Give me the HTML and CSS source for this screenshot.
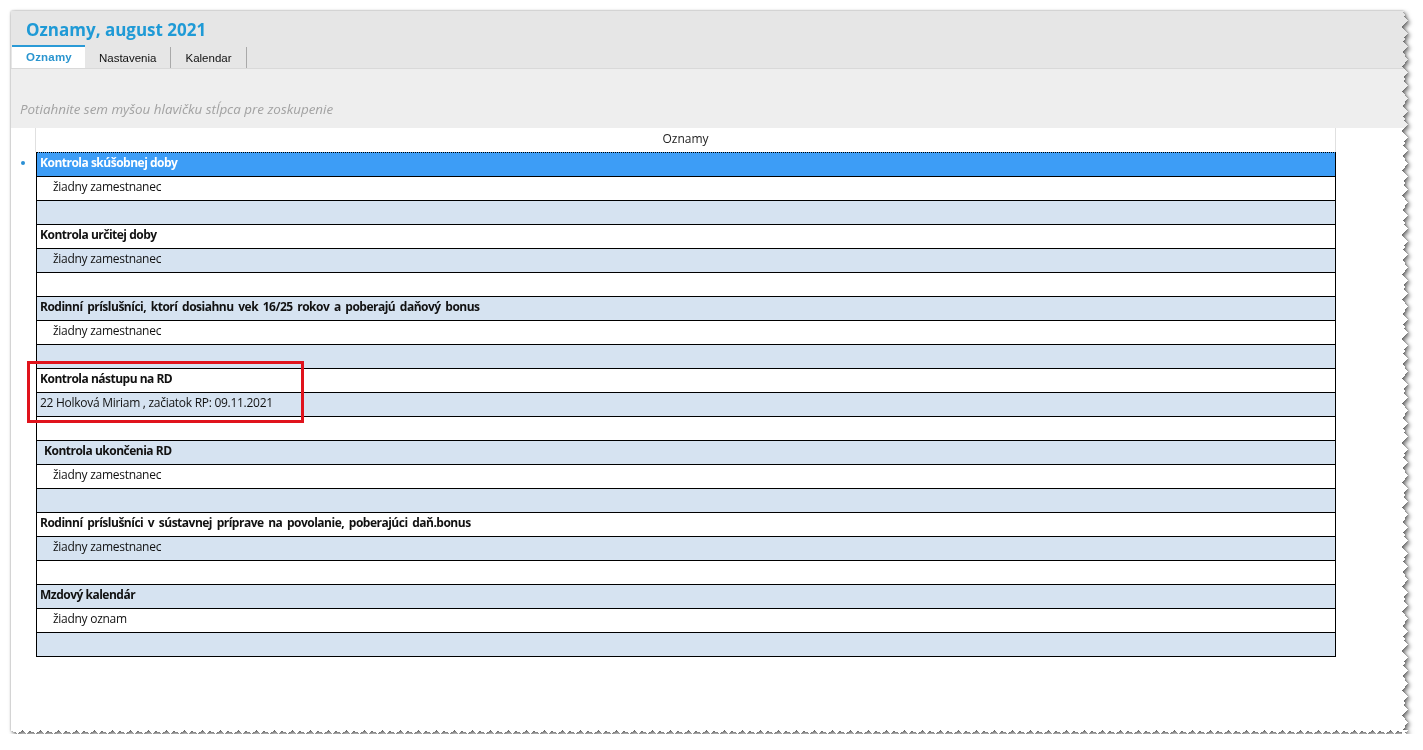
FILE: index.html
```html
<!DOCTYPE html>
<html lang="sk">
<head>
<meta charset="utf-8">
<title>Oznamy, august 2021</title>
<link rel="stylesheet" href="styles.css">
</head>
<body>
<div class="paper-shadow">
  <div class="paper">
    <header class="head">
      <h1 class="title">Oznamy, august 2021</h1>
      <nav class="tabs">
        <span class="tab active">Oznamy</span>
        <span class="tab">Nastavenia</span>
        <span class="tab">Kalendar</span>
      </nav>
    </header>
    <div class="group-panel">Potiahnite sem myšou hlavičku stĺpca pre zoskupenie</div>
    <div class="grid">
      <div class="row header-row"><div class="ind"></div><div class="col-head">Oznamy</div></div>
      <div class="row"><div class="ind"><span class="dot"></span></div><div class="cell first selected bold">Kontrola skúšobnej doby</div></div>
      <div class="row"><div class="ind"></div><div class="cell indent">žiadny zamestnanec</div></div>
      <div class="row"><div class="ind"></div><div class="cell alt"></div></div>
      <div class="row"><div class="ind"></div><div class="cell bold">Kontrola určitej doby</div></div>
      <div class="row"><div class="ind"></div><div class="cell alt indent">žiadny zamestnanec</div></div>
      <div class="row"><div class="ind"></div><div class="cell"></div></div>
      <div class="row"><div class="ind"></div><div class="cell alt bold wide">Rodinní príslušníci, ktorí dosiahnu vek 16/25 rokov a poberajú daňový bonus</div></div>
      <div class="row"><div class="ind"></div><div class="cell indent">žiadny zamestnanec</div></div>
      <div class="row"><div class="ind"></div><div class="cell alt"></div></div>
      <div class="row"><div class="ind"></div><div class="cell bold">Kontrola nástupu na RD</div></div>
      <div class="row"><div class="ind"></div><div class="cell alt">22 Holková Miriam , začiatok RP: 09.11.2021</div></div>
      <div class="row"><div class="ind"></div><div class="cell"></div></div>
      <div class="row"><div class="ind"></div><div class="cell alt bold space">Kontrola ukončenia RD</div></div>
      <div class="row"><div class="ind"></div><div class="cell indent">žiadny zamestnanec</div></div>
      <div class="row"><div class="ind"></div><div class="cell alt"></div></div>
      <div class="row"><div class="ind"></div><div class="cell bold wide">Rodinní príslušníci v sústavnej príprave na povolanie, poberajúci daň.bonus</div></div>
      <div class="row"><div class="ind"></div><div class="cell alt indent">žiadny zamestnanec</div></div>
      <div class="row"><div class="ind"></div><div class="cell"></div></div>
      <div class="row"><div class="ind"></div><div class="cell alt bold">Mzdový kalendár</div></div>
      <div class="row"><div class="ind"></div><div class="cell indent">žiadny oznam</div></div>
      <div class="row"><div class="ind"></div><div class="cell alt"></div></div>
    </div>
    <div class="highlight"></div>
  </div>
</div>
</body>
</html>
```

FILE: styles.css
```css
html, body {
  margin: 0;
  background: #ffffff;
}
body {
  padding: 11px 0 0 11px;
}
.paper-shadow {
  width: 1397px;
  height: 723px;
  filter: drop-shadow(0 0 1px rgba(0,0,0,0.3)) drop-shadow(2px 2px 2px rgba(0,0,0,0.55));
}
.paper {
  position: relative;
  width: 100%;
  height: 100%;
  background: #ffffff;
  font-family: "Open Sans", "Noto Sans", sans-serif;
  -webkit-mask:
    linear-gradient(#000 0 0) 0 0 / calc(100% - 6px) calc(100% - 4px) no-repeat,
    conic-gradient(from -135deg at right, #0000, #000 1deg 89deg, #0000 90deg) calc(100% - 2px) 0 / 4px 8px repeat-y,
    conic-gradient(from -135deg at right, #0000, #000 1deg 89deg, #0000 90deg) 100% 3px / 6px 13px repeat-y,
    conic-gradient(from -45deg at bottom, #0000, #000 1deg 89deg, #0000 90deg) 0 calc(100% - 1px) / 6px 3px repeat-x,
    conic-gradient(from -45deg at bottom, #0000, #000 1deg 89deg, #0000 90deg) 2px 100% / 9px 4px repeat-x;
  mask:
    linear-gradient(#000 0 0) 0 0 / calc(100% - 6px) calc(100% - 4px) no-repeat,
    conic-gradient(from -135deg at right, #0000, #000 1deg 89deg, #0000 90deg) calc(100% - 2px) 0 / 4px 8px repeat-y,
    conic-gradient(from -135deg at right, #0000, #000 1deg 89deg, #0000 90deg) 100% 3px / 6px 13px repeat-y,
    conic-gradient(from -45deg at bottom, #0000, #000 1deg 89deg, #0000 90deg) 0 calc(100% - 1px) / 6px 3px repeat-x,
    conic-gradient(from -45deg at bottom, #0000, #000 1deg 89deg, #0000 90deg) 2px 100% / 9px 4px repeat-x;
}

/* header */
.head {
  background: #e6e6e6;
  height: 57px;
  display: flex;
  flex-direction: column;
  border-bottom: 1px solid #d9d9d9;
}
.title {
  margin: 0;
  height: 34px;
  box-sizing: border-box;
  padding: 9px 0 0 15px;
  font-family: "Open Sans", sans-serif;
  font-weight: 700;
  font-size: 17px;
  line-height: 20px;
  color: #1f9ad6;
}
.tabs {
  display: flex;
  height: 23px;
  padding-left: 1px;
}
.tab {
  font-family: "Liberation Sans", Arial, sans-serif;
  font-size: 11.5px;
  color: #111;
  padding: 0 14px;
  line-height: 22px;
  height: 21px;
  margin-top: 2px;
  border-right: 1px solid #a9a9a9;
}
.tab.active {
  background: #ffffff;
  border-top: 2px solid #2a9ad6;
  border-right: none;
  margin-top: 0;
  height: 21px;
  line-height: 20px;
  padding: 0 13px 0 14px;
  font-weight: 700;
  color: #2a95cf;
  letter-spacing: 0.2px;
}

/* group panel */
.group-panel {
  background: #eeeeee;
  height: 59px;
  box-sizing: border-box;
  padding: 31px 0 0 9px;
  font-family: "Open Sans", sans-serif;
  font-style: italic;
  font-size: 13.4px;
  color: #a2a2a2;
}

/* grid */
.grid {
  display: flex;
  flex-direction: column;
}
.row {
  display: grid;
  grid-template-columns: 25px 1300px;
}
.ind {
  position: relative;
}
.dot {
  position: absolute;
  left: 10px;
  top: 9px;
  width: 4px;
  height: 4px;
  border-radius: 50%;
  background: #2b8fd4;
}
.col-head {
  height: 24px;
  box-sizing: border-box;
  margin-left: -1px;
  width: 1301px;
  border-left: 1px solid #e0e0e0;
  border-right: 1px solid #e0e0e0;
  text-align: center;
  font-size: 12px;
  line-height: 22px;
  color: #222;
}
.cell {
  height: 24px;
  box-sizing: border-box;
  border-left: 1px solid #000;
  border-right: 1px solid #000;
  border-bottom: 1px solid #000;
  padding-left: 3px;
  font-size: 12px;
  line-height: 19px;
  letter-spacing: -0.28px;
  color: #111;
  background: #ffffff;
  white-space: nowrap;
}
.cell.first {
  height: 25px;
  border-top: 1px dotted #000;
}
.cell.alt {
  background: #d6e3f1;
}
.cell.selected {
  background: #3d9df6;
  color: #ffffff;
}
.cell.bold {
  font-weight: 700;
  letter-spacing: -0.5px;
}
.cell.wide {
  word-spacing: 2px;
}
.cell.indent {
  padding-left: 16px;
}
.cell.space {
  padding-left: 7px;
}

/* annotation */
.highlight {
  position: absolute;
  left: 16px;
  top: 350px;
  width: 277px;
  height: 62px;
  box-sizing: border-box;
  border: 3px solid #e0131c;
}
```
